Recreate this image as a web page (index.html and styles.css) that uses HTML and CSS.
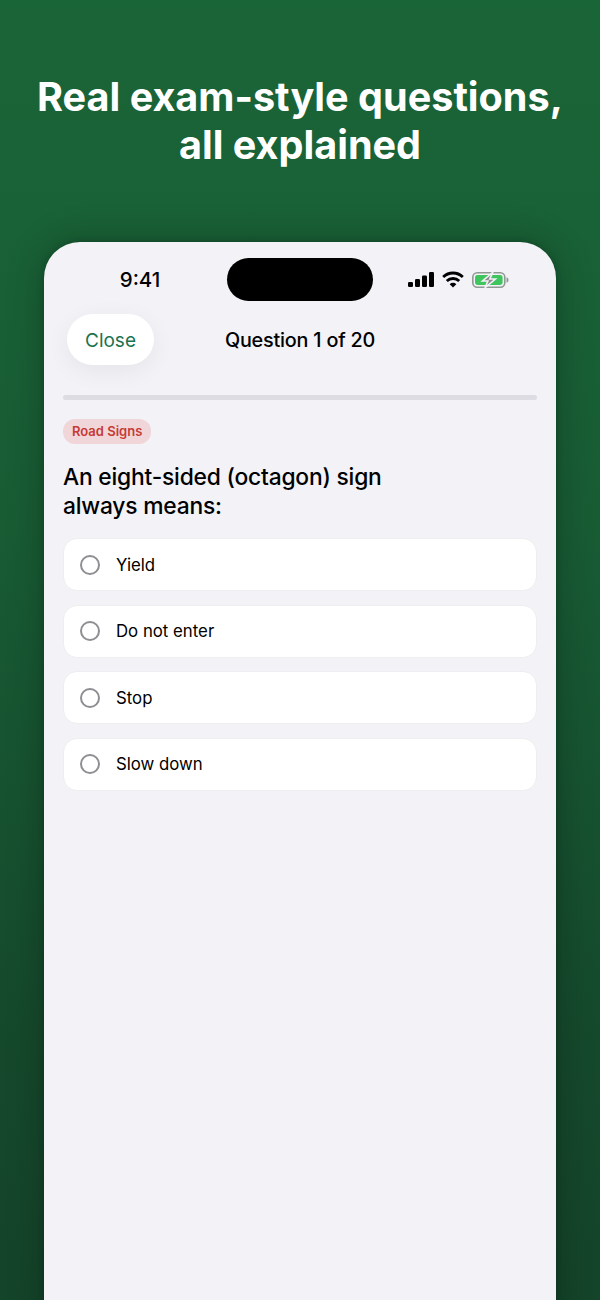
FILE: index.html
```html
<!DOCTYPE html>
<html lang="en">
<head>
    <meta charset="UTF-8">
    <meta name="viewport" content="width=device-width, initial-scale=1.0">
    <title>Real exam-style questions</title>
    <link rel="stylesheet" href="styles.css">
</head>
<body>
    <div class="screen">
        <h1 class="headline">Real exam-style questions,<br>all explained</h1>

        <div class="phone">
            <div class="status-bar">
                <span class="clock">9:41</span>
                <div class="island"></div>
                <div class="status-icons">
                    <svg width="26" height="15" viewBox="0 0 26 15">
                        <rect x="0" y="10" width="5" height="5" rx="1.2" fill="#000"/>
                        <rect x="7" y="7" width="5" height="8" rx="1.2" fill="#000"/>
                        <rect x="14" y="3.5" width="5" height="11.5" rx="1.2" fill="#000"/>
                        <rect x="21" y="0" width="5" height="15" rx="1.2" fill="#000"/>
                    </svg>
                    <svg width="22" height="17" viewBox="0 0 22 17">
                        <path d="M1.2 6a14 14 0 0 1 19.6 0" fill="none" stroke="#000" stroke-width="2.8"/>
                        <path d="M4.8 10a8.9 8.9 0 0 1 12.4 0" fill="none" stroke="#000" stroke-width="2.8"/>
                        <path d="M11 16.6 7.7 13.2a4.6 4.6 0 0 1 6.6 0z" fill="#000"/>
                    </svg>
                    <svg width="37" height="16" viewBox="0 0 37 16">
                        <rect x="0.8" y="0.8" width="32" height="14.4" rx="4.4" fill="none" stroke="#8f9a92" stroke-width="1.6"/>
                        <rect x="3" y="3" width="27.6" height="10" rx="2.4" fill="#3fc55e"/>
                        <path d="M34.5 5.2c1.3.4 2 1.5 2 2.8s-.7 2.4-2 2.8z" fill="#8f9a92"/>
                        <path d="M21 0.2 10.5 9h5.4l-3 6.8L23.4 7h-5.6z" fill="#8d8d90" stroke="#f2f2f6" stroke-width="1.6"/>
                    </svg>
                </div>
            </div>

            <div class="nav-bar">
                <button class="close-btn">Close</button>
                <span class="nav-title">Question 1 of 20</span>
            </div>

            <div class="progress"></div>

            <div class="quiz">
                <span class="tag">Road Signs</span>
                <h2 class="question">An eight-sided (octagon) sign<br>always means:</h2>
                <ul class="answers">
                    <li class="answer"><span class="radio"></span>Yield</li>
                    <li class="answer"><span class="radio"></span>Do not enter</li>
                    <li class="answer"><span class="radio"></span>Stop</li>
                    <li class="answer"><span class="radio"></span>Slow down</li>
                </ul>
            </div>
        </div>
    </div>
</body>
</html>
```

FILE: styles.css
```css
* {
    box-sizing: border-box;
}
html, body {
    margin: 0;
    padding: 0;
}
body {
    font-family: Inter, "Liberation Sans", sans-serif;
    color: #000;
}
.screen {
    width: 600px;
    height: 1300px;
    overflow: hidden;
    background: linear-gradient(180deg, #1a6538 0%, #185c34 40%, #15492c 80%, #14442a 100%);
    padding-top: 73px;
}
.headline {
    margin: 0;
    font-size: 39.6px;
    line-height: 48px;
    font-weight: 700;
    color: #fff;
    text-align: center;
}
.phone {
    width: 512px;
    height: 1100px;
    margin: 73px auto 0;
    background: #f2f2f7;
    border-radius: 36px 36px 0 0;
    box-shadow: 0 0 6px rgba(0, 0, 0, 0.18), 0 0 36px rgba(0, 0, 0, 0.25);
}
.status-bar {
    height: 72px;
    padding-top: 16px;
    display: grid;
    grid-template-columns: 183px 146px 183px;
    align-items: start;
}
.clock {
    margin-top: 9px;
    text-align: center;
    padding-left: 9px;
    font-size: 20.5px;
    line-height: 25px;
    font-weight: 500;
}
.island {
    height: 43px;
    background: #000;
    border-radius: 22px;
}
.status-icons {
    display: flex;
    align-items: center;
    gap: 8px;
    margin-top: 13px;
    padding-left: 35px;
}
.nav-bar {
    position: relative;
    height: 51px;
    padding-left: 23px;
    display: flex;
    align-items: center;
}
.close-btn {
    width: 87px;
    height: 51px;
    padding: 2px 0 0;
    border: none;
    border-radius: 26px;
    background: #fff;
    color: #1a7350;
    font-family: inherit;
    font-size: 19px;
    box-shadow: 0 6px 24px rgba(0, 0, 0, 0.06);
}
.nav-title {
    position: absolute;
    left: 0;
    right: 0;
    text-align: center;
    font-size: 19.8px;
    font-weight: 500;
    letter-spacing: -0.2px;
}
.progress {
    height: 5px;
    margin: 30px 19px 0;
    background: #dcdce2;
    border-radius: 3px;
}
.quiz {
    padding: 19px 19px 0;
}
.tag {
    display: inline-block;
    height: 25px;
    padding: 0 9px;
    border-radius: 12px;
    background: #f0d6d8;
    color: #c63a36;
    font-size: 13px;
    line-height: 25px;
    font-weight: 600;
}
.question {
    margin: 18px 0 18px;
    font-size: 22.8px;
    line-height: 29px;
    font-weight: 500;
    letter-spacing: -0.2px;
}
.answers {
    list-style: none;
    margin: 0;
    padding: 0;
    display: flex;
    flex-direction: column;
    gap: 13.5px;
}
.answer {
    height: 53px;
    padding-left: 16px;
    display: flex;
    align-items: center;
    gap: 16px;
    background: #fff;
    border: 1px solid #eeeef1;
    border-radius: 14px;
    font-size: 16.8px;
}
.radio {
    width: 20px;
    height: 20px;
    border: 2px solid #8e8e93;
    border-radius: 50%;
}
```
